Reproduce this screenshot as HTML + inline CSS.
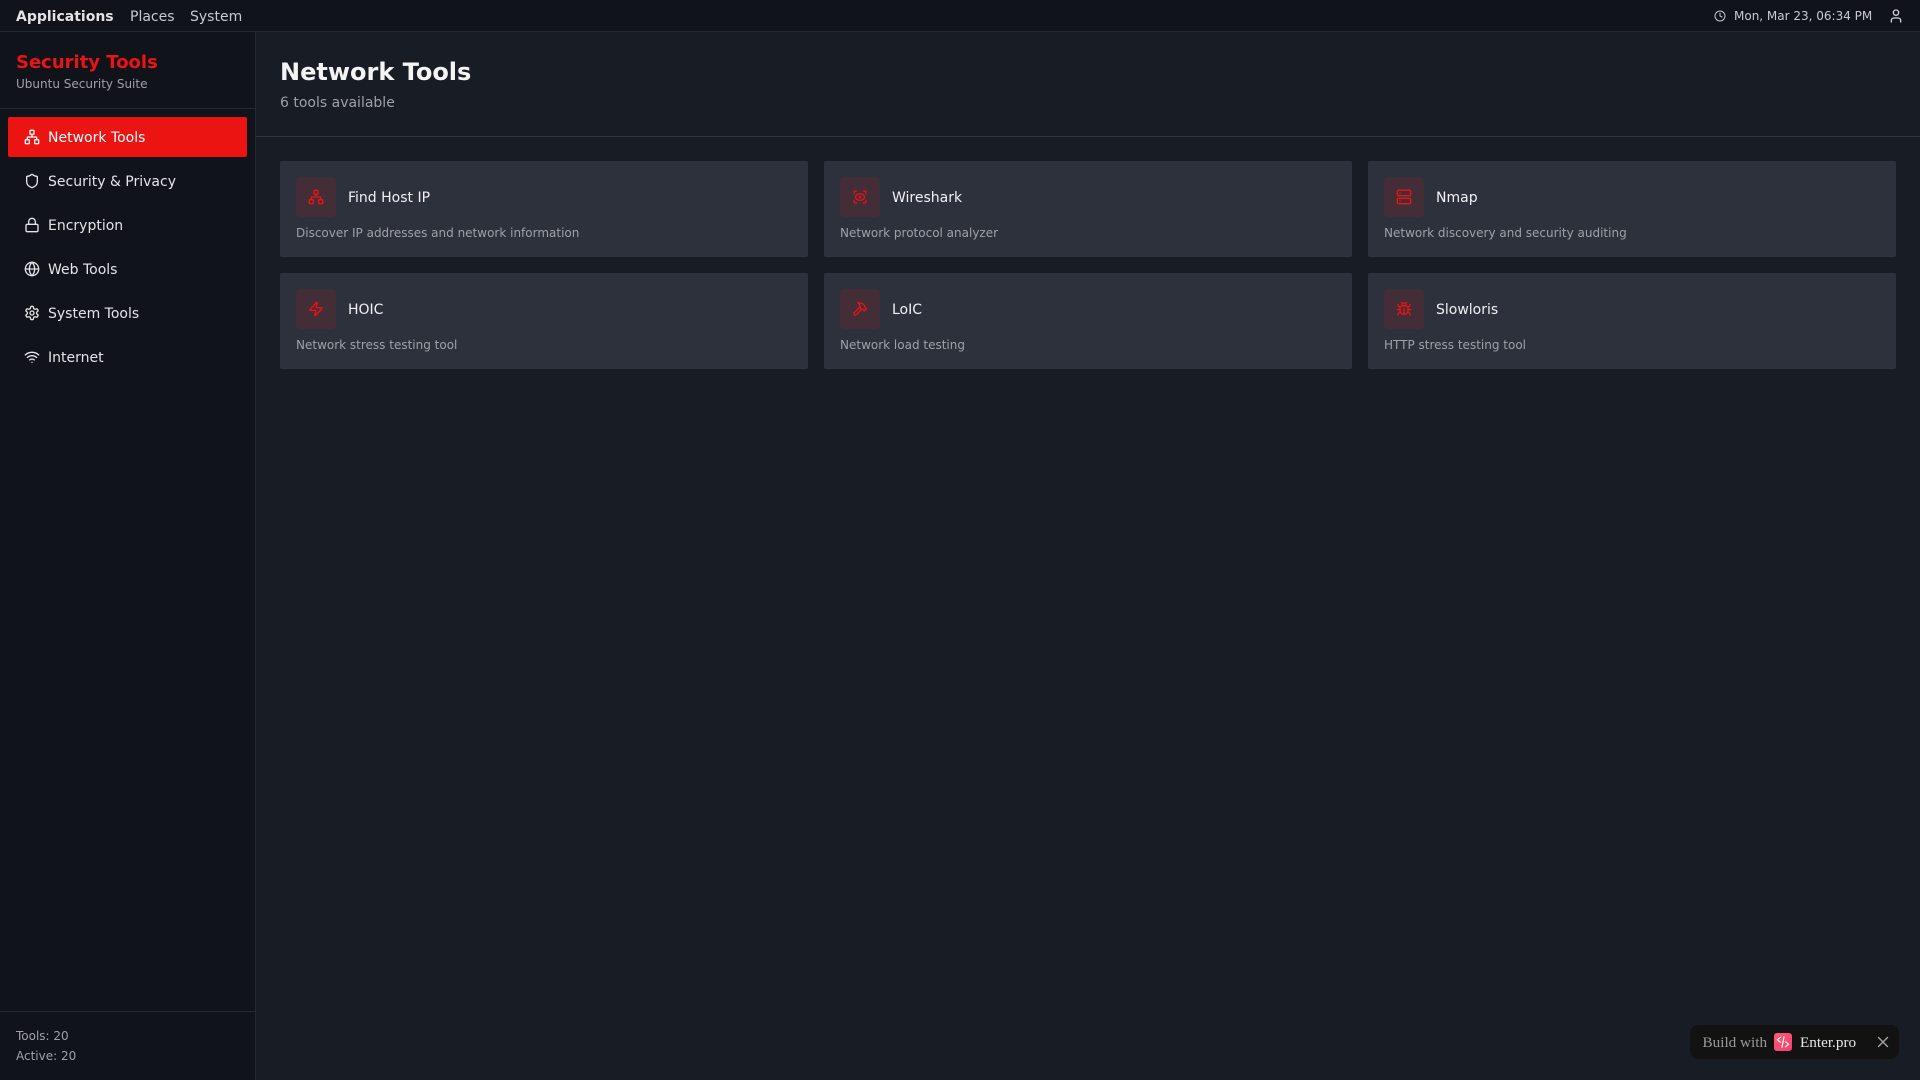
<!DOCTYPE html>
<html lang="en"><head><meta charset="utf-8"><title>Network Tools</title>
<style>
*{box-sizing:border-box;margin:0;padding:0}
html,body{width:1920px;height:1080px;overflow:hidden;background:#181c25;font-family:"DejaVu Sans",sans-serif;color:#f4f4f5}
svg{display:block;fill:none;stroke:currentColor;stroke-width:2;stroke-linecap:round;stroke-linejoin:round}
.abs{position:absolute;white-space:nowrap}
#top{position:absolute;left:0;top:0;width:1920px;height:32px;background:#10131a;border-bottom:1px solid #232732}
#side{position:absolute;left:0;top:32px;width:256px;height:1048px;background:#10131a;border-right:1px solid #232732}
.nav{position:absolute;left:8px;width:239px;height:40px;border-radius:2px;color:#e4e4e7}
.nav svg{position:absolute;left:16px;top:12px}
.nav span{position:absolute;left:40px;top:1px;line-height:40px;font-size:14px}
.card{position:absolute;width:528px;height:96px;background:#2d313c;border-radius:2px}
.ic{position:absolute;left:16px;top:16px;width:40px;height:40px;border-radius:4px;background:#432d37;color:#ec1313}
.ic svg{position:absolute;left:12px;top:12px}
.card b{position:absolute;left:68px;top:17px;line-height:40px;font-size:14px;font-weight:400;color:#f1f1f3;white-space:nowrap}
.card p{position:absolute;left:16px;top:64px;line-height:16px;font-size:12px;color:#a0a1a7;white-space:nowrap}
</style></head><body>
<div id="top">
<div class="abs" style="left:16px;top:1px;line-height:32px;font-size:14px;font-weight:700;color:#e4e4e7">Applications</div>
<div class="abs" style="left:130px;top:1px;line-height:32px;font-size:14px;color:#c9cad0">Places</div>
<div class="abs" style="left:190px;top:1px;line-height:32px;font-size:14px;color:#c9cad0">System</div>
<svg class="abs" style="left:1714px;top:10px;color:#c4c5ca" width="12" height="12" viewBox="0 0 24 24"><circle cx="12" cy="12" r="10"/><polyline points="12 6 12 12 16 14"/></svg>
<div class="abs" style="left:1734px;top:1px;line-height:31px;font-size:12px;color:#c9cad0">Mon, Mar 23, 06:34 PM</div>
<svg class="abs" style="left:1888px;top:8px;color:#d4d4d8" width="16" height="16" viewBox="0 0 24 24"><path d="M19 21v-2a4 4 0 0 0-4-4H9a4 4 0 0 0-4 4v2"/><circle cx="12" cy="7" r="4"/></svg>
</div>
<div id="side">
<div class="abs" style="left:16px;top:17px;line-height:28px;font-size:18px;font-weight:700;color:#ec1313">Security Tools</div>
<div class="abs" style="left:16px;top:44px;line-height:16px;font-size:12px;color:#a0a1a7">Ubuntu Security Suite</div>
<div class="abs" style="left:0;top:76px;width:255px;height:1px;background:#232732"></div>
<div class="nav" style="top:85px;background:#ec1313;color:#fff"><svg width="16" height="16" viewBox="0 0 24 24"><rect x="16" y="16" width="6" height="6" rx="1"/><rect x="2" y="16" width="6" height="6" rx="1"/><rect x="9" y="2" width="6" height="6" rx="1"/><path d="M5 16v-3a1 1 0 0 1 1-1h12a1 1 0 0 1 1 1v3"/><path d="M12 12V8"/></svg><span>Network Tools</span></div>
<div class="nav" style="top:129px"><svg width="16" height="16" viewBox="0 0 24 24"><path d="M20 13c0 5-3.5 7.5-7.66 8.95a1 1 0 0 1-.67-.01C7.5 20.5 4 18 4 13V6a1 1 0 0 1 1-1c2 0 4.5-1.2 6.24-2.72a1.17 1.17 0 0 1 1.52 0C14.51 3.81 17 5 19 5a1 1 0 0 1 1 1z"/></svg><span>Security &amp; Privacy</span></div>
<div class="nav" style="top:173px"><svg width="16" height="16" viewBox="0 0 24 24"><rect width="18" height="11" x="3" y="11" rx="2"/><path d="M7 11V7a5 5 0 0 1 10 0v4"/></svg><span>Encryption</span></div>
<div class="nav" style="top:217px"><svg width="16" height="16" viewBox="0 0 24 24"><circle cx="12" cy="12" r="10"/><path d="M12 2a14.5 14.5 0 0 0 0 20 14.5 14.5 0 0 0 0-20"/><path d="M2 12h20"/></svg><span>Web Tools</span></div>
<div class="nav" style="top:261px"><svg width="16" height="16" viewBox="0 0 24 24"><path d="M12.22 2h-.44a2 2 0 0 0-2 2v.18a2 2 0 0 1-1 1.73l-.43.25a2 2 0 0 1-2 0l-.15-.08a2 2 0 0 0-2.73.73l-.22.38a2 2 0 0 0 .73 2.73l.15.1a2 2 0 0 1 1 1.72v.51a2 2 0 0 1-1 1.74l-.15.09a2 2 0 0 0-.73 2.73l.22.38a2 2 0 0 0 2.73.73l.15-.08a2 2 0 0 1 2 0l.43.25a2 2 0 0 1 1 1.73V20a2 2 0 0 0 2 2h.44a2 2 0 0 0 2-2v-.18a2 2 0 0 1 1-1.73l.43-.25a2 2 0 0 1 2 0l.15.08a2 2 0 0 0 2.73-.73l.22-.39a2 2 0 0 0-.73-2.73l-.15-.08a2 2 0 0 1-1-1.74v-.5a2 2 0 0 1 1-1.74l.15-.09a2 2 0 0 0 .73-2.73l-.22-.38a2 2 0 0 0-2.73-.73l-.15.08a2 2 0 0 1-2 0l-.43-.25a2 2 0 0 1-1-1.73V4a2 2 0 0 0-2-2z"/><circle cx="12" cy="12" r="3"/></svg><span>System Tools</span></div>
<div class="nav" style="top:305px"><svg width="16" height="16" viewBox="0 0 24 24"><path d="M12 20h.01"/><path d="M2 8.82a15 15 0 0 1 20 0"/><path d="M5 12.859a10 10 0 0 1 14 0"/><path d="M8.5 16.429a5 5 0 0 1 7 0"/></svg><span>Internet</span></div>
<div class="abs" style="left:0;top:979px;width:255px;height:1px;background:#232732"></div>
<div class="abs" style="left:16px;top:994px;line-height:20px;font-size:12px;color:#a0a1a7">Tools: 20<br>Active: 20</div>
</div>
<div class="abs" style="left:280px;top:54px;line-height:36px;font-size:24px;font-weight:700;color:#f4f4f5">Network Tools</div>
<div class="abs" style="left:280px;top:93px;line-height:20px;font-size:14px;color:#a0a1a7">6 tools available</div>
<div class="abs" style="left:256px;top:136px;width:1664px;height:1px;background:#333743"></div>

<div class="card" style="left:280px;top:161px"><div class="ic"><svg width="16" height="16" viewBox="0 0 24 24"><rect x="16" y="16" width="6" height="6" rx="1"/><rect x="2" y="16" width="6" height="6" rx="1"/><rect x="9" y="2" width="6" height="6" rx="1"/><path d="M5 16v-3a1 1 0 0 1 1-1h12a1 1 0 0 1 1 1v3"/><path d="M12 12V8"/></svg></div><b>Find Host IP</b><p>Discover IP addresses and network information</p></div>
<div class="card" style="left:824px;top:161px"><div class="ic"><svg width="16" height="16" viewBox="0 0 24 24"><path d="M3 7V5a2 2 0 0 1 2-2h2"/><path d="M17 3h2a2 2 0 0 1 2 2v2"/><path d="M21 17v2a2 2 0 0 1-2 2h-2"/><path d="M7 21H5a2 2 0 0 1-2-2v-2"/><circle cx="12" cy="12" r="1"/><path d="M18.944 12.33a1 1 0 0 0 0-.66 7.5 7.5 0 0 0-13.888 0 1 1 0 0 0 0 .66 7.5 7.5 0 0 0 13.888 0"/></svg></div><b>Wireshark</b><p>Network protocol analyzer</p></div>
<div class="card" style="left:1368px;top:161px"><div class="ic"><svg width="16" height="16" viewBox="0 0 24 24"><rect width="20" height="8" x="2" y="2" rx="2"/><rect width="20" height="8" x="2" y="14" rx="2"/><line x1="6" x2="6.01" y1="6" y2="6"/><line x1="6" x2="6.01" y1="18" y2="18"/></svg></div><b>Nmap</b><p>Network discovery and security auditing</p></div>
<div class="card" style="left:280px;top:273px"><div class="ic"><svg width="16" height="16" viewBox="0 0 24 24"><path d="M4 14a1 1 0 0 1-.78-1.63l9.9-10.2a.5.5 0 0 1 .86.46l-1.92 6.02A1 1 0 0 0 13 10h7a1 1 0 0 1 .78 1.63l-9.9 10.2a.5.5 0 0 1-.86-.46l1.92-6.02A1 1 0 0 0 11 14z"/></svg></div><b>HOIC</b><p>Network stress testing tool</p></div>
<div class="card" style="left:824px;top:273px"><div class="ic"><svg width="16" height="16" viewBox="0 0 24 24"><path d="m15 12-8.373 8.373a1 1 0 1 1-3-3L12 9"/><path d="m18 15 4-4"/><path d="m21.5 11.5-1.914-1.914A2 2 0 0 1 19 8.172V7l-2.26-2.26a6 6 0 0 0-4.202-1.756L9 2.96l.92.82A6.18 6.18 0 0 1 12 8.4V10l2 2h1.172a2 2 0 0 1 1.414.586L18.5 14.5"/></svg></div><b>LoIC</b><p>Network load testing</p></div>
<div class="card" style="left:1368px;top:273px"><div class="ic"><svg width="16" height="16" viewBox="0 0 24 24"><path d="m8 2 1.88 1.88"/><path d="M14.12 3.88 16 2"/><path d="M9 7.13v-1a3.003 3.003 0 1 1 6 0v1"/><path d="M12 20c-3.3 0-6-2.7-6-6v-3a4 4 0 0 1 4-4h4a4 4 0 0 1 4 4v3c0 3.3-2.7 6-6 6"/><path d="M12 20v-9"/><path d="M6.53 9C4.6 8.8 3 7.1 3 5"/><path d="M6 13H2"/><path d="M3 21c0-2.1 1.7-3.9 3.8-4"/><path d="M20.97 5c0 2.1-1.6 3.8-3.5 4"/><path d="M22 13h-4"/><path d="M17.2 17c2.1.1 3.8 1.9 3.8 4"/></svg></div><b>Slowloris</b><p>HTTP stress testing tool</p></div>

<div class="abs" style="left:1690px;top:1025px;width:209px;height:34px;background:#121212;border-radius:8px;font-family:'Liberation Serif',serif;font-size:15.2px;line-height:34px">
<span class="abs" style="left:12.5px;top:1px;color:#9a9a9a">Build with</span>
<div class="abs" style="left:84px;top:8px;width:18px;height:18px;border-radius:3px;background:linear-gradient(135deg,#ff5a7a,#f43f6e)"><svg width="18" height="18" viewBox="0 0 18 18" style="color:#fff;stroke-width:1.2"><path d="M6.5 4.3 3.3 6.8 6.5 9.3"/><path d="M11.5 8.7 14.7 11.2 11.5 13.7"/><path d="M10 3.7 8 14.3"/></svg></div>
<span class="abs" style="left:110px;top:1px;color:#e8e8e8">Enter.pro</span>
<svg class="abs" style="left:187px;top:11px;color:#a3a3a3;stroke-width:1.4" width="12" height="12" viewBox="0 0 12 12"><path d="M1.5 1.5 10.5 10.5"/><path d="M10.5 1.5 1.5 10.5"/></svg>
</div>
</body></html>
